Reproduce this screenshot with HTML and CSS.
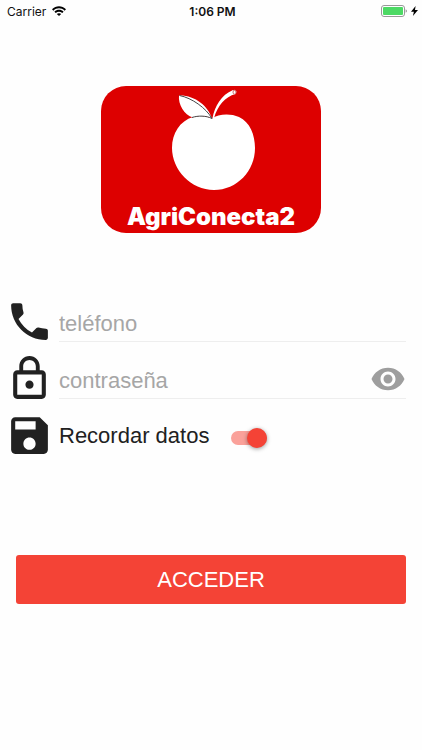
FILE: index.html
```html
<!DOCTYPE html>
<html lang="es">
<head>
<meta charset="utf-8">
<meta name="viewport" content="width=device-width, initial-scale=1">
<title>AgriConecta2</title>
<link rel="stylesheet" href="styles.css">
</head>
<body>
<header class="status">
  <div class="status-left">
    <span>Carrier</span>
    <svg class="wifi" viewBox="0 0 14 10" aria-hidden="true">
      <path d="M0 3.2C4-.9 10-.9 14 3.2L12.6 4.7C9.4 1.5 4.6 1.5 1.4 4.7Z"/>
      <path d="M2.4 5.7C5 3.1 9 3.1 11.6 5.7L10.2 7.1C8.4 5.4 5.6 5.4 3.8 7.1Z"/>
      <path d="M4.8 8C6 6.9 8 6.9 9.2 8L7 10Z"/>
    </svg>
  </div>
  <span class="time">1:06 PM</span>
  <div class="status-right">
    <svg class="battery" viewBox="0 0 26 12" aria-hidden="true">
      <rect class="battery-case" x=".5" y=".5" width="23" height="11" rx="2.5"/>
      <rect class="battery-level" x="2" y="2" width="20" height="8" rx="1"/>
      <path class="battery-tip" d="M24.6 4.2Q26 4.8 26 6T24.6 7.8Z"/>
    </svg>
    <svg class="bolt" viewBox="0 0 7 10" aria-hidden="true"><path d="M4.6 0L0 5.7H2.9L1.9 10L7 4.1H4Z"/></svg>
  </div>
</header>
<main class="screen">
  <svg class="logo" viewBox="0 0 220 147" role="img" aria-label="AgriConecta2">
    <rect class="logo-bg" width="220" height="147" rx="25"/>
    <path class="fruit" d="M111 32.5C117 28 129 27 138 31C149 36 154 49 154 62C154 85 136 104 113 104C90 104 71 84 71 62C71 47 79 35 92 31C99 29 106 30 111 32.5Z"/>
    <path class="leaf" d="M111 32.5C107 20 94 9 78 9.5C77 18 83 29 92 31.5C99 29 106 30 111 32.5Z"/>
    <path class="vein" d="M78.500 9.500C91 12 105 22 111 32.500C105 29.500 97 29.500 91 31.500"/>
    <path class="fruit" d="M111.500 32C114 20 120 9 132 4L135.500 5.500L134.500 8C124 11 117 19 113 32Z"/>
    <ellipse class="stem-end" cx="133.500" cy="6.200" rx="1.500" ry="2"/>
    <text class="brand" x="110" y="139" text-anchor="middle">AgriConecta2</text>
  </svg>
  <form class="login">
    <div class="row">
      <label for="phone" aria-label="teléfono"><svg class="icon" viewBox="0 0 24 24" aria-hidden="true"><path d="M6.620 10.790c1.440 2.830 3.760 5.140 6.590 6.590l2.200-2.200c.27-.27.67-.36 1.020-.24 1.120.37 2.330.57 3.570.57.55 0 1 .45 1 1V20c0 .55-.45 1-1 1-9.390 0-17-7.610-17-17 0-.55.45-1 1-1h3.500c.55 0 1 .45 1 1 0 1.250.2 2.450.57 3.570.11.35.03.74-.25 1.020l-2.200 2.200z"/></svg></label>
      <div class="field"><input id="phone" type="tel" placeholder="teléfono"></div>
    </div>
    <div class="row">
      <label for="password" aria-label="contraseña"><svg class="icon" viewBox="0 0 24 24" aria-hidden="true"><path d="M12 17c1.100 0 2-.9 2-2s-.9-2-2-2-2 .9-2 2 .9 2 2 2zm6-9h-1V6c0-2.760-2.240-5-5-5S7 3.240 7 6v2H6c-1.100 0-2 .9-2 2v10c0 1.100.9 2 2 2h12c1.100 0 2-.9 2-2V10c0-1.100-.9-2-2-2zM8.900 6c0-1.710 1.390-3.100 3.100-3.100s3.100 1.390 3.100 3.100v2H8.900V6zM18 20H6V10h12v10z"/></svg></label>
      <div class="field">
        <input id="password" type="password" placeholder="contraseña">
        <button class="reveal" type="button" aria-label="Mostrar contraseña"><svg class="eye" viewBox="0 0 24 24" aria-hidden="true"><path d="M12 4.500C7 4.500 2.730 7.610 1 12c1.730 4.390 6 7.500 11 7.500s9.270-3.110 11-7.500c-1.730-4.390-6-7.500-11-7.500zM12 17c-2.760 0-5-2.240-5-5s2.240-5 5-5 5 2.240 5 5-2.240 5-5 5zm0-8c-1.660 0-3 1.340-3 3s1.340 3 3 3 3-1.340 3-3-1.340-3-3-3z"/></svg></button>
      </div>
    </div>
    <div class="row">
      <svg class="icon" viewBox="0 0 24 24" aria-hidden="true"><path d="M17 3H5c-1.110 0-2 .9-2 2v14c0 1.100.89 2 2 2h14c1.100 0 2-.9 2-2V7l-4-4zm-5 16c-1.660 0-3-1.340-3-3s1.340-3 3-3 3 1.340 3 3-1.340 3-3 3zm3-10H5V5h10v4z"/></svg>
      <label class="remember" for="remember">Recordar datos</label>
      <input class="switch" id="remember" type="checkbox" role="switch" checked>
    </div>
    <button class="submit" type="submit">ACCEDER</button>
  </form>
</main>
</body>
</html>
```
FILE: styles.css
```css
* {
  box-sizing: border-box;
}

body {
  margin: 0;
  background: #fefefe;
  color: #212121;
  font-family: "Liberation Sans", Arial, sans-serif;
  font-size: 22px;
}

svg {
  display: block;
}

.status {
  display: grid;
  grid-template-columns: 1fr auto 1fr;
  align-items: center;
  height: 22px;
  padding: 0 4px 0 7px;
  color: #111;
  font-family: Inter, sans-serif;
  font-size: 12px;
}

.status-left,
.status-right {
  display: flex;
  align-items: center;
  gap: 6px;
}

.status-right {
  justify-content: flex-end;
  gap: 4px;
}

.time {
  font-weight: 600;
}

.wifi {
  width: 14px;
  height: 10px;
}

.battery {
  width: 26px;
  height: 12px;
}

.battery-case {
  fill: none;
  stroke: #999;
}

.battery-level {
  fill: #4cd964;
}

.battery-tip {
  fill: #999;
}

.bolt {
  width: 7px;
  height: 10px;
}

.screen {
  padding: 64px 16px 0;
}

.logo {
  width: 220px;
  margin: 0 auto;
}

.logo-bg {
  fill: #dd0000;
}

.fruit,
.leaf,
.brand {
  fill: #fff;
}

.vein {
  fill: none;
  stroke: #444;
}

.stem-end {
  fill: #fff;
  stroke: #c66;
}

.brand {
  font-family: Inter, sans-serif;
  font-size: 24px;
  font-weight: 900;
}

.login {
  display: flex;
  flex-direction: column;
  gap: 8px;
  margin-top: 64px;
}

.row {
  display: flex;
  align-items: center;
  height: 49px;
  margin-left: -11px;
}

.icon {
  flex: none;
  width: 49px;
  height: 49px;
  fill: #212121;
}

.field {
  display: flex;
  flex: 1;
  align-items: center;
  height: 40px;
  margin-left: 5px;
  border-bottom: 1px solid #eee;
}

.field input {
  flex: 1;
  min-width: 0;
  height: 39px;
  padding: 6px 0 0;
  border: 0;
  outline: 0;
  background: none;
  color: inherit;
  font: inherit;
}

.field input::placeholder {
  color: #a6a6a6;
  opacity: 1;
}

.reveal {
  padding: 2px 0 0;
  border: 0;
  background: none;
}

.eye {
  width: 36px;
  height: 36px;
  fill: #9e9e9e;
}

.remember {
  margin-left: 5px;
}

.switch {
  display: flex;
  align-items: center;
  justify-content: flex-end;
  width: 36px;
  height: 14px;
  margin: 4px 0 0 22px;
  border-radius: 7px;
  background: #faa19a;
  appearance: none;
}

.switch::before {
  content: "";
  flex: none;
  width: 20px;
  height: 20px;
  border-radius: 50%;
  background: #f44336;
  box-shadow: 0 1px 4px rgba(0, 0, 0, 0.4);
}

.switch:not(:checked) {
  justify-content: flex-start;
}

.submit {
  height: 49px;
  margin-top: 87px;
  padding: 0;
  border: 0;
  border-radius: 3px;
  background: #f44336;
  color: #fff;
  font: inherit;
}
```
